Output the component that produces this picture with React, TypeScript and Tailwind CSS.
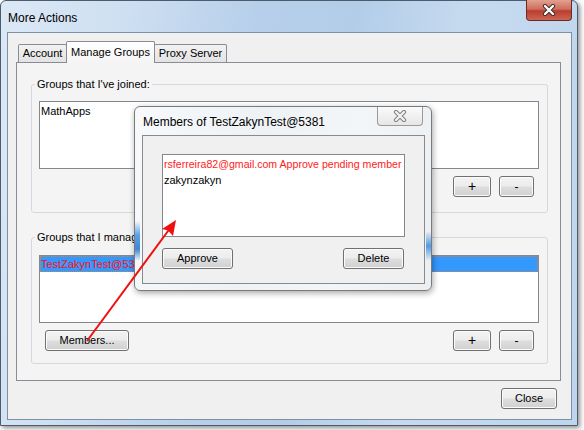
import React from 'react';

function Btn({ children, className = '' }: { children: React.ReactNode; className?: string }) {
  return (
    <div
      className={`flex items-center justify-center h-[21px] border border-[#707070] rounded-[3px] bg-[linear-gradient(#f3f3f3_0%,#ececec_48%,#dedede_52%,#d0d0d0_100%)] text-[11px] text-black shadow-[inset_0_0_0_1px_#fbfbfb] ${className}`}
    >
      {children}
    </div>
  );
}

function GroupBox({ title, children, className = '' }: { title: string; children: React.ReactNode; className?: string }) {
  return (
    <fieldset className={`border border-[#d5d9dd] rounded-[3px] ${className}`}>
      <legend className="-ml-[4px] px-[2px] text-[11px] leading-[13px] text-black">{title}</legend>
      {children}
    </fieldset>
  );
}

function CloseGlyph({ light }: { light?: boolean }) {
  return (
    <svg width="14" height="12" viewBox="0 0 14 12">
      <path d="M3 2 L11 10 M11 2 L3 10" stroke={light ? '#7a7a7a' : '#3a2a2a'} strokeWidth="4.2" strokeLinecap="round" />
      <path d="M3 2 L11 10 M11 2 L3 10" stroke={light ? '#f4f4f4' : '#ffffff'} strokeWidth="2.4" strokeLinecap="round" />
    </svg>
  );
}

export default function App() {
  return (
    <div className="relative w-[584px] h-[430px] bg-white overflow-hidden font-['Liberation_Sans',Arial,sans-serif] text-black">
      {/* Main window */}
      <div className="flex flex-col w-[578px] h-[426px] border border-[#4d5c6c] rounded-t-[6px] bg-[linear-gradient(100deg,#dbe8f6_0%,#cfe0f2_18%,#b7cfea_40%,#b3cde9_55%,#c6daef_72%,#bed5ed_100%)] shadow-[2px_2px_5px_rgba(0,0,0,0.45)]">
        {/* Title bar */}
        <div className="flex h-[31px]">
          <div className="pl-[7px] pt-[10px] text-[12px] leading-[15px] text-black">More Actions</div>
          <div className="ml-auto mr-[5px] -mt-px w-[46px] h-[21px] flex items-center justify-center rounded-b-[4px] border border-[#6b2b22] border-t-0 bg-[linear-gradient(#e3a090_0%,#cf6f5c_45%,#b93c30_55%,#cc6650_100%)]">
            <CloseGlyph />
          </div>
        </div>

        {/* Client area */}
        <div className="ml-[6px] w-[565px] h-[388px] border border-[#7e90a4] bg-[#f0f0f0] flex flex-col">
          {/* Tabs */}
          <div className="mt-[8px] ml-[10px] flex items-end h-[21px] text-[11px]">
            <div className="h-[18px] w-[49px] flex items-center justify-center border border-[#898c95] border-b-0 rounded-t-[2px] bg-[linear-gradient(#f2f2f2,#e3e3e3)]">
              Account
            </div>
            <div className="relative z-10 -ml-px -mb-px h-[22px] w-[89px] flex items-start pt-[2px] justify-center border border-[#898c95] border-b-0 rounded-t-[2px] bg-[linear-gradient(#ffffff,#f4f4f4)]">
              Manage Groups
            </div>
            <div className="-ml-px h-[18px] w-[73px] flex items-center justify-center border border-[#898c95] border-b-0 rounded-t-[2px] bg-[linear-gradient(#f2f2f2,#e3e3e3)]">
              Proxy Server
            </div>
          </div>

          {/* Tab panel */}
          <div className="ml-[8px] w-[545px] h-[319px] border border-[#898c95] bg-[#f4f4f4] flex flex-col">
            <GroupBox title="Groups that I've joined:" className="mt-[15px] ml-[14px] w-[517px] px-[7px] pb-[15px]">
              <div className="mt-[10px] w-[500px] h-[68px] border border-[#828790] bg-white pl-px pt-[2px] text-[11px] leading-[14px]">
                MathApps
              </div>
              <div className="mt-[7px] flex justify-end gap-[8px] pr-[6px]">
                <Btn className="w-[38px] text-[14px]">+</Btn>
                <Btn className="w-[35px] text-[12px]">-</Btn>
              </div>
            </GroupBox>

            <GroupBox title="Groups that I manage:" className="mt-[18px] ml-[14px] w-[517px] px-[7px] pb-[12px]">
              <div className="mt-[11px] w-[500px] h-[68px] border border-[#828790] bg-white">
                <div className="h-[16px] border border-dotted border-[#d9803a] bg-[#3399ff] text-[11px] leading-[14px] text-[#ff1010]">
                  TestZakynTest@5381
                </div>
              </div>
              <div className="mt-[7px] flex items-center gap-[8px] pr-[6px]">
                <Btn className="ml-[6px] w-[84px]">Members...</Btn>
                <Btn className="ml-auto w-[38px] text-[14px]">+</Btn>
                <Btn className="w-[35px] text-[12px]">-</Btn>
              </div>
            </GroupBox>
          </div>

          <Btn className="mt-[7px] ml-auto mr-[14px] w-[56px]">Close</Btn>
        </div>
      </div>

      {/* Members dialog (overlay) */}
      <div className="absolute left-[134px] top-[106px] w-[298px] h-[185px] flex flex-col rounded-[6px] border border-[#7a7a7a] bg-[linear-gradient(100deg,#f7f9fb_0%,#eef2f5_40%,#f3f6f8_70%,#eceff2_100%)] shadow-[1px_2px_6px_rgba(0,0,0,0.35)]">
        <div className="absolute left-0 top-[114px] w-[5px] h-[40px] rounded-full bg-[linear-gradient(rgba(61,140,224,0)_0%,#5aa2ea_35%,#3d86d6_70%,rgba(61,140,224,0)_100%)]" />
        <div className="absolute right-0 top-[124px] w-[5px] h-[30px] rounded-full bg-[linear-gradient(rgba(61,140,224,0)_0%,#4f9ae6_50%,rgba(61,140,224,0)_100%)]" />
        <div className="flex h-[28px]">
          <div className="pl-[8px] pt-[8px] text-[12px] leading-[15px] text-black">Members of TestZakynTest@5381</div>
          <div className="ml-auto mr-[8px] w-[46px] h-[19px] flex items-center justify-center rounded-b-[4px] border border-[#9a9a9a] border-t-0 bg-[linear-gradient(#fbfbfb,#e6e6e6)]">
            <CloseGlyph light />
          </div>
        </div>
        <div className="relative ml-[7px] w-[283px] h-[149px] border border-[#8a8a8a] bg-[#f0f0f0] pl-[19px] pt-[18px]">
          <div className="w-[243px] h-[83px] border border-[#828790] bg-white pl-px pt-[1px] text-[11px] leading-[16px] whitespace-nowrap overflow-hidden">
            <div className="text-[10.6px] text-[#ff1a1a]">rsferreira82@gmail.com Approve pending member</div>
            <div>zakynzakyn</div>
          </div>
          <div className="mt-[11px] w-[242px] flex justify-between">
            <Btn className="w-[71px]">Approve</Btn>
            <Btn className="w-[61px]">Delete</Btn>
          </div>
        </div>
      </div>

      {/* Red annotation arrow */}
      <svg className="absolute inset-0 pointer-events-none" width="584" height="430" viewBox="0 0 584 430">
        <line x1="87" y1="341" x2="171" y2="227" stroke="#f01010" strokeWidth="2" />
        <polygon points="176,220 173,236 168,230.5 162,229" fill="#f01010" />
      </svg>
    </div>
  );
}
